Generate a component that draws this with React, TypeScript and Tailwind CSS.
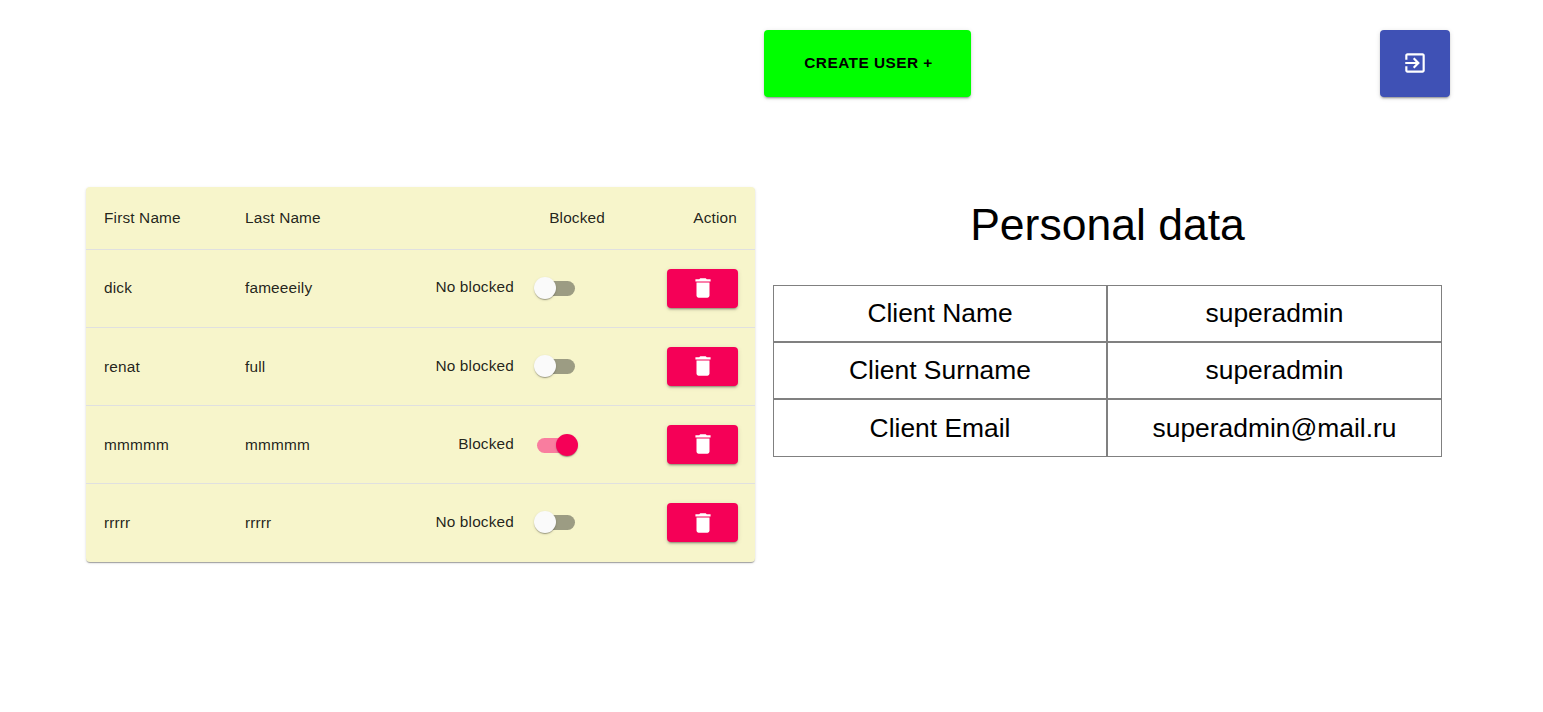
const users = [
  { first: "dick", last: "fameeeily", blocked: false, cell: "", label: "pb-[2px]", sw: "" },
  { first: "renat", last: "full", blocked: false, cell: "pt-[2px]", label: "", sw: "" },
  { first: "mmmmm", last: "mmmmm", blocked: true, cell: "pt-[2px]", label: "", sw: "mt-[2px]" },
  { first: "rrrrr", last: "rrrrr", blocked: false, cell: "", label: "pb-[2px]", sw: "mb-[2px]" },
];

const personal = [
  ["Client Name", "superadmin"],
  ["Client Surname", "superadmin"],
  ["Client Email", "superadmin@mail.ru"],
];

function Toggle({ on, className }: { on: boolean; className: string }) {
  return (
    <span className={`relative block w-[44px] h-[22px] ml-[20px] mr-[11px] ${className}`}>
      <span
        className={`absolute left-[3px] top-[4px] h-[15px] w-[38px] rounded-full ${
          on ? "bg-[#f97d9f]" : "bg-[#9c9c83]"
        }`}
      />
      <span
        className={`absolute top-0 h-[22px] w-[22px] rounded-full shadow-[0_2px_1px_-1px_rgba(0,0,0,0.2),0_1px_1px_0_rgba(0,0,0,0.14),0_1px_3px_0_rgba(0,0,0,0.12)] ${
          on ? "left-[22px] bg-[#f50057]" : "left-0 bg-[#fafafa]"
        }`}
      />
    </span>
  );
}

function TrashButton() {
  return (
    <button className="flex h-[39px] w-[71px] items-center justify-center rounded-[4px] bg-[#f50057] shadow-[0_3px_1px_-2px_rgba(0,0,0,0.2),0_2px_2px_0_rgba(0,0,0,0.14),0_1px_5px_0_rgba(0,0,0,0.12)]">
      <svg width="26" height="26" viewBox="0 0 24 24" fill="white">
        <path d="M6 19c0 1.1.9 2 2 2h8c1.1 0 2-.9 2-2V7H6v12zM19 4h-3.5l-1-1h-5l-1 1H5v2h14V4z" />
      </svg>
    </button>
  );
}

export default function App() {
  return (
    <main className="min-h-[712px] bg-white font-['Liberation_Sans',Arial,sans-serif]">
      <div className="flex pt-[30px] pl-[764px]">
        <button className="h-[67px] w-[207px] rounded-[4px] bg-[#00ff00] pb-[2px] pl-[2px] text-[15.4px] font-bold tracking-[0.03em] text-black shadow-[0_3px_1px_-2px_rgba(0,0,0,0.2),0_2px_2px_0_rgba(0,0,0,0.14),0_1px_5px_0_rgba(0,0,0,0.12)]">
          CREATE USER +
        </button>
        <button className="ml-[409px] flex h-[67px] w-[70px] items-center justify-center rounded-[4px] bg-[#3f51b5] pb-[2px] shadow-[0_3px_1px_-2px_rgba(0,0,0,0.2),0_2px_2px_0_rgba(0,0,0,0.14),0_1px_5px_0_rgba(0,0,0,0.12)]">
          <svg width="26" height="26" viewBox="0 0 24 24" fill="white">
            <path d="M10.09 15.59L11.5 17l5-5-5-5-1.41 1.41L12.67 11H3v2h9.67l-2.58 2.59zM19 3H5c-1.11 0-2 .9-2 2v4h2V5h14v14H5v-4H3v4c0 1.1.89 2 2 2h14c1.1 0 2-.9 2-2V5c0-1.1-.9-2-2-2z" />
          </svg>
        </button>
      </div>

      <div className="mt-[90px] flex pl-[86px]">
        <div className="w-[669px] self-start overflow-hidden rounded-[4px] bg-[#f7f5cb] shadow-[0_2px_1px_-1px_rgba(0,0,0,0.2),0_1px_1px_0_rgba(0,0,0,0.14),0_1px_3px_0_rgba(0,0,0,0.12)]">
          <table className="w-full table-fixed border-collapse text-[15.4px] tracking-[0.01em] text-[#000000de]">
            <colgroup>
              <col className="w-[141px]" />
              <col className="w-[141px]" />
              <col className="w-[253px]" />
              <col className="w-[134px]" />
            </colgroup>
            <thead>
              <tr className="h-[62px] border-b border-[#e0e0e0]">
                <th className="pl-[18px] text-left font-normal">First Name</th>
                <th className="pl-[18px] text-left font-normal">Last Name</th>
                <th className="pr-[16px] text-right font-normal">Blocked</th>
                <th className="pr-[18px] text-right font-normal">Action</th>
              </tr>
            </thead>
            <tbody>
              {users.map((user) => (
                <tr key={user.first} className="h-[78px] border-b border-[#e0e0e0] last:h-[79px] last:border-b-0">
                  <td className={`pl-[18px] ${user.cell}`}>{user.first}</td>
                  <td className={`pl-[18px] ${user.cell}`}>{user.last}</td>
                  <td>
                    <div className="flex items-center justify-end pr-[32px]">
                      <span className={user.label}>{user.blocked ? "Blocked" : "No blocked"}</span>
                      <Toggle on={user.blocked} className={user.sw} />
                    </div>
                  </td>
                  <td>
                    <div className="flex justify-end pr-[17px]">
                      <TrashButton />
                    </div>
                  </td>
                </tr>
              ))}
            </tbody>
          </table>
        </div>

        <section className="ml-[18px] w-[669px]">
          <h1 className="mt-[13px] text-center text-[44.5px] leading-[50px] text-black">Personal data</h1>
          <table className="mt-[35px] w-full table-fixed border-separate border-spacing-0 text-[26.4px] text-black">
            <colgroup>
              <col className="w-[334px]" />
              <col className="w-[335px]" />
            </colgroup>
            <tbody>
              {personal.map(([label, value]) => (
                <tr key={label} className="h-[57px] last:h-[58px] last:[&>td]:pt-[2px]">
                  <td className="border border-[#808080] text-center">{label}</td>
                  <td className="border border-[#808080] text-center">{value}</td>
                </tr>
              ))}
            </tbody>
          </table>
        </section>
      </div>
    </main>
  );
}
